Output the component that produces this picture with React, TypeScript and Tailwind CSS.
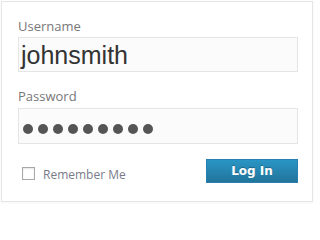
import React from "react";

export default function App() {
  const dots = Array.from({ length: 9 });
  return (
    <div className="w-[314px] h-[204px] bg-white pl-px pt-px">
      <div
        className="w-[312px] h-[201px] bg-white border border-[#e5e5e5] shadow-[0_1px_3px_rgba(0,0,0,0.04)] pt-[15px] pl-[16px] pr-[14px] flex flex-col"
        style={{ fontFamily: "'Open Sans', sans-serif" }}
      >
        <label className="text-[13px] leading-[18px] text-[#777]">Username</label>
        <div className="mt-[2px] h-[35px] w-full border border-[#e5e5e5] bg-[#fbfbfb] flex items-center pl-[2px]">
          <span
            className="text-[25px] leading-[28px] text-[#333]"
            style={{ fontFamily: "'Liberation Sans', Arial, sans-serif" }}
          >
            johnsmith
          </span>
        </div>
        <label className="mt-[15px] text-[13px] leading-[18px] text-[#777]">Password</label>
        <div className="mt-[3px] h-[36px] w-full border border-[#e5e5e5] bg-[#fbfbfb] flex items-center pl-[4px] pt-[5px] gap-[5px]">
          {dots.map((_, i) => (
            <div key={i} className="w-[10px] h-[10px] rounded-full bg-[#555]" />
          ))}
        </div>
        <div className="mt-[15px] flex items-center justify-between">
          <div className="flex items-center pl-[4px] pt-[5px]">
            <div className="w-[13px] h-[13px] border border-[#a8a8a8] bg-white shadow-[inset_0_1px_2px_rgba(0,0,0,0.1)]" />
            <span className="ml-[8px] text-[12px] leading-[16px] text-[#7a7a88] pt-[3px]">Remember Me</span>
          </div>
          <button
            className="w-[92px] h-[24px] border border-[#2a7fae] bg-gradient-to-b from-[#2a95c5] to-[#21759b] text-white text-[12px] font-bold flex items-center justify-center [text-shadow:0_-1px_0_rgba(0,0,0,0.25)]"
            style={{ fontFamily: "'DejaVu Sans', Verdana, sans-serif" }}
          >
            Log In
          </button>
        </div>
      </div>
    </div>
  );
}
